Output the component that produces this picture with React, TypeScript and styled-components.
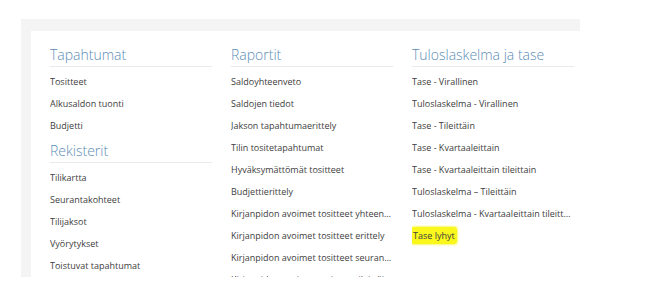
import React from 'react'
import styled, { createGlobalStyle } from 'styled-components'

type Section = {
  title: string
  items: string[]
}

const columns: Section[][] = [
  [
    { title: 'Tapahtumat', items: ['Tositteet', 'Alkusaldon tuonti', 'Budjetti'] },
    {
      title: 'Rekisterit',
      items: ['Tilikartta', 'Seurantakohteet', 'Tilijaksot', 'Vyörytykset', 'Toistuvat tapahtumat'],
    },
  ],
  [
    {
      title: 'Raportit',
      items: [
        'Saldoyhteenveto',
        'Saldojen tiedot',
        'Jakson tapahtumaerittely',
        'Tilin tositetapahtumat',
        'Hyväksymättömät tositteet',
        'Budjettierittely',
        'Kirjanpidon avoimet tositteet yhteenveto',
        'Kirjanpidon avoimet tositteet erittely',
        'Kirjanpidon avoimet tositteet seurantakohteittain',
        'Kirjanpidon avoimet tositteet tileittäin',
      ],
    },
  ],
  [
    {
      title: 'Tuloslaskelma ja tase',
      items: [
        'Tase - Virallinen',
        'Tuloslaskelma - Virallinen',
        'Tase - Tileittäin',
        'Tase - Kvartaaleittain',
        'Tase - Kvartaaleittain tileittain',
        'Tuloslaskelma – Tileittäin',
        'Tuloslaskelma - Kvartaaleittain tileittäin',
        'Tase lyhyt',
      ],
    },
  ],
]

const highlighted = 'Tase lyhyt'

const App = (): React.ReactElement => (
  <>
    <GlobalStyle />
    <Page>
      <Panel>
        <Card>
          {columns.map((sections, i) => (
            <Column key={i}>
              {sections.map((section) => (
                <div key={section.title}>
                  <Heading>{section.title}</Heading>
                  <List>
                    {section.items.map((item) => (
                      <Item key={item}>
                        {item === highlighted ? <Marker>{item}</Marker> : item}
                      </Item>
                    ))}
                  </List>
                </div>
              ))}
            </Column>
          ))}
        </Card>
      </Panel>
    </Page>
  </>
)

export default App

const GlobalStyle = createGlobalStyle`
  body {
    margin: 0;
    background: #fff;
    font-family: "Open Sans", "Liberation Sans", sans-serif;
  }
`
const Page = styled.div`
  padding: 19px 0 0 21px;
`
const Panel = styled.div`
  box-sizing: border-box;
  width: 559px;
  height: 258px;
  padding: 12px 0 0 10px;
  background: #f4f4f4;
  overflow: hidden;
`
const Card = styled.div`
  display: grid;
  grid-template-columns: repeat(3, 162px);
  column-gap: 19px;
  height: 100%;
  padding-left: 19px;
  background: #fff;
`
const Column = styled.div`
  display: flex;
  flex-direction: column;
  min-width: 0;
`
const Heading = styled.div`
  margin-top: 14px;
  padding-bottom: 1px;
  border-bottom: 1px solid #e9ecee;
  font-size: 14px;
  font-weight: 300;
  line-height: 20px;
  color: #5d8db6;
  div + div > & {
    margin-top: 4px;
  }
`
const List = styled.div`
  padding-top: 4px;
`
const Item = styled.div`
  font-size: 9px;
  line-height: 22px;
  color: #404040;
  white-space: nowrap;
  overflow: hidden;
  text-overflow: ellipsis;
`
const Marker = styled.span`
  padding: 2px 2px;
  margin-left: -1px;
  background: #f9f71c;
  border-radius: 3px;
  box-shadow: 0 0 2px 1px #fafa70;
`
